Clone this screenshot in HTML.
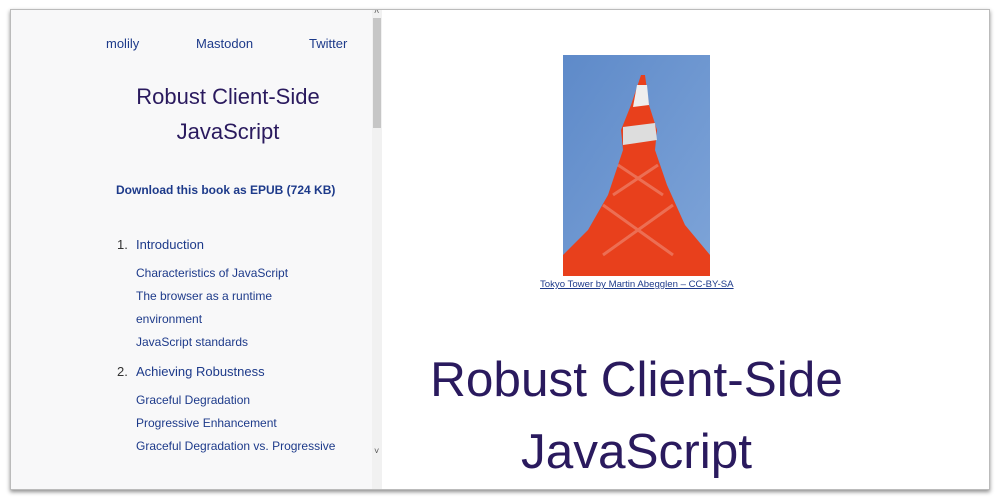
<!DOCTYPE html>
<html><head><meta charset="utf-8"><style>
*{margin:0;padding:0;box-sizing:border-box}
body{width:1000px;height:500px;background:#fff;position:relative;overflow:hidden;font-family:"Liberation Sans","DejaVu Sans",sans-serif}
.frame{position:absolute;left:10px;top:9px;width:980px;height:481px;border:1px solid #bbb;box-shadow:0 2px 4px rgba(0,0,0,.45);background:#fff;overflow:hidden}
.side{position:absolute;left:0;top:0;width:371px;height:100%;background:#f8f8f9}
.sb{position:absolute;left:361px;top:0;width:10px;height:100%;background:#f1f1f1}
.thumb{position:absolute;left:362px;top:8px;width:8px;height:110px;background:#c6c6c6}
.t{position:absolute;white-space:nowrap;color:#1d3a8a}
.s{font-size:12px}
</style></head><body>
<div class="frame">
<div class="side"></div>
<div class="sb"></div><div class="thumb"></div>
<div class="t" style="left:363px;top:-4px;font-size:9px;color:#555">˄</div>
<div class="t" style="left:363px;top:436px;font-size:9px;color:#555">˅</div>
<div class="t" style="left:95px;top:26px;font-size:13px">molily</div>
<div class="t" style="left:185px;top:26px;font-size:13px">Mastodon</div>
<div class="t" style="left:298px;top:26px;font-size:13px">Twitter</div>
<div class="t" style="left:117px;width:200px;text-align:center;top:69px;font-size:22px;line-height:35px;color:#2a1a5e">Robust Client-Side<br>JavaScript</div>
<div class="t" style="left:105px;top:173px;font-size:12px;font-weight:bold;color:#1d3a8a">Download this book as EPUB (724 KB)</div>
<div class="t" style="left:106px;top:227px;font-size:13px;color:#333">1.</div>
<div class="t" style="left:125px;top:227px;font-size:13px">Introduction</div>
<div class="t s" style="left:125px;top:256px">Characteristics of JavaScript</div>
<div class="t s" style="left:125px;top:279px">The browser as a runtime</div>
<div class="t s" style="left:125px;top:302px">environment</div>
<div class="t s" style="left:125px;top:325px">JavaScript standards</div>
<div class="t" style="left:106px;top:354px;font-size:13px;color:#333">2.</div>
<div class="t" style="left:125px;top:354px;font-size:13px">Achieving Robustness</div>
<div class="t s" style="left:125px;top:383px">Graceful Degradation</div>
<div class="t s" style="left:125px;top:406px">Progressive Enhancement</div>
<div class="t s" style="left:125px;top:429px">Graceful Degradation vs. Progressive</div>
<svg style="position:absolute;left:552px;top:45px" width="147" height="221" viewBox="0 0 147 221">
<defs><linearGradient id="g" x1="0" y1="0" x2="1" y2="1"><stop offset="0" stop-color="#5e8ac9"/><stop offset="1" stop-color="#7ea4d8"/></linearGradient></defs>
<rect width="147" height="221" fill="url(#g)"/>
<polygon points="78,20 82,20 86,50 94,75 92,95 104,130 122,170 147,200 147,221 0,221 0,200 25,175 45,140 60,95 58,75 68,50" fill="#e8401c"/>
<polygon points="60,72 92,68 94,85 60,90" fill="#ddd"/>
<polygon points="74,30 84,30 86,50 70,52" fill="#eee"/>
<g stroke="#f8f8f8" stroke-opacity=".25" stroke-width="3" fill="none"><path d="M40,150 L110,200 M110,150 L40,200 M55,110 L100,140 M95,110 L50,140"/></g>
</svg>
<div class="t" style="left:529px;top:269px;font-size:9.6px;text-decoration:underline">Tokyo Tower by Martin Abegglen – CC-BY-SA</div>
<div class="t" style="left:371px;width:509px;text-align:center;top:334px;font-size:49.5px;line-height:72px;color:#2a1a5e">Robust Client-Side<br>JavaScript</div>
</div>
</body></html>
